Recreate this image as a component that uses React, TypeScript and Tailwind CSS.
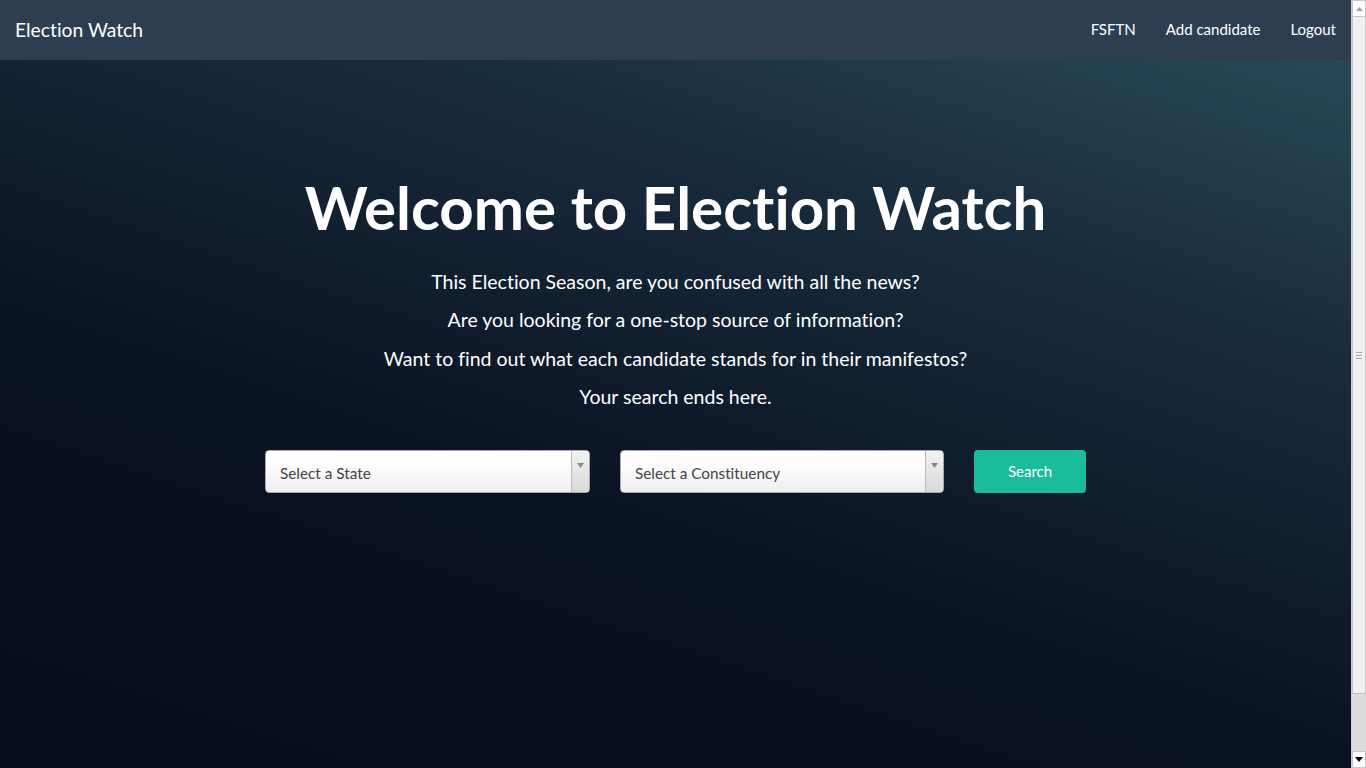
import React from "react";

function ChosenSelect({ label, width }: { label: string; width: string }) {
  return (
    <div
      className={`${width} h-[43px] flex items-stretch rounded-[4px] border border-[#aaaaaa] bg-[linear-gradient(#ffffff_20%,#f8f8f8_55%,#eeeeee_100%)] shadow-[0_1px_1px_rgba(0,0,0,0.1)] overflow-hidden`}
    >
      <div className="flex-1 flex items-center pl-[14px] text-[15.3px] text-[#444444] pt-[4px]">{label}</div>
      <div className="w-[18px] border-l border-[#bbbbbb] bg-[linear-gradient(#f2f2f2,#d8d8d8)] flex justify-center pt-[12px]">
        <svg width="7" height="5" viewBox="0 0 7 5">
          <polygon points="0,0 7,0 3.5,5" fill="#888888" />
        </svg>
      </div>
    </div>
  );
}

function FakeScrollbar() {
  return (
    <div className="w-[15px] h-full flex flex-col bg-[#dcdcdc] border-l border-[#cfcfcf]">
      <div className="h-[17px] bg-white border border-[#c8c8c8] flex items-center justify-center">
        <svg width="7" height="4" viewBox="0 0 7 4">
          <polygon points="0,4 7,4 3.5,0" fill="#a0a0a0" />
        </svg>
      </div>
      <div className="h-[677px] bg-[#f0f0f0] border-x border-b border-[#c4c4c4] flex items-center justify-center">
        <div className="flex flex-col gap-[2px]">
          <div className="w-[6px] h-px bg-[#a8a8a8]" />
          <div className="w-[6px] h-px bg-[#a8a8a8]" />
          <div className="w-[6px] h-px bg-[#a8a8a8]" />
        </div>
      </div>
      <div className="flex-1" />
      <div className="h-[17px] bg-white border border-[#c8c8c8] flex items-center justify-center">
        <svg width="8" height="5" viewBox="0 0 8 5">
          <polygon points="0,0 8,0 4,5" fill="#000000" />
        </svg>
      </div>
    </div>
  );
}

export default function App() {
  return (
    <div
      className="h-screen w-full flex overflow-hidden [font-variant-ligatures:none]"
      style={{ fontFamily: "Lato, 'Open Sans', sans-serif" }}
    >
      <div className="flex-1 flex flex-col bg-[linear-gradient(18deg,#070d1a_0%,#0a1323_38%,#1a2d3d_72%,#2d4f5e_100%)] text-white">
        <nav className="h-[60px] shrink-0 bg-[#2e3e50] flex items-center justify-between">
          <div className="pl-[15px] text-[19.3px] leading-none pb-[1px]">Election Watch</div>
          <div className="flex items-center text-[15px] pb-[1px]">
            <span className="px-[15px]">FSFTN</span>
            <span className="px-[15px]">Add candidate</span>
            <span className="px-[15px]">Logout</span>
          </div>
        </nav>
        <div className="flex flex-col items-center pt-[114px]">
          <h1 className="text-[60px] font-bold leading-[1.1] mb-[28px]">Welcome to Election Watch</h1>
          <div className="flex flex-col items-center text-[19.5px] leading-[28.4px]">
            <p className="mb-[10px]">This Election Season, are you confused with all the news?</p>
            <p className="mb-[10px]">Are you looking for a one-stop source of information?</p>
            <p className="mb-[10px]">Want to find out what each candidate stands for in their manifestos?</p>
            <p className="mb-[10px]">Your search ends here.</p>
          </div>
          <div className="flex items-start gap-[30px] mt-[28px]">
            <ChosenSelect label="Select a State" width="w-[325px]" />
            <ChosenSelect label="Select a Constituency" width="w-[324px]" />
            <button className="w-[112px] h-[43px] rounded-[4px] bg-[#1abc9c] text-white text-[15px]">Search</button>
          </div>
        </div>
      </div>
      <FakeScrollbar />
    </div>
  );
}
